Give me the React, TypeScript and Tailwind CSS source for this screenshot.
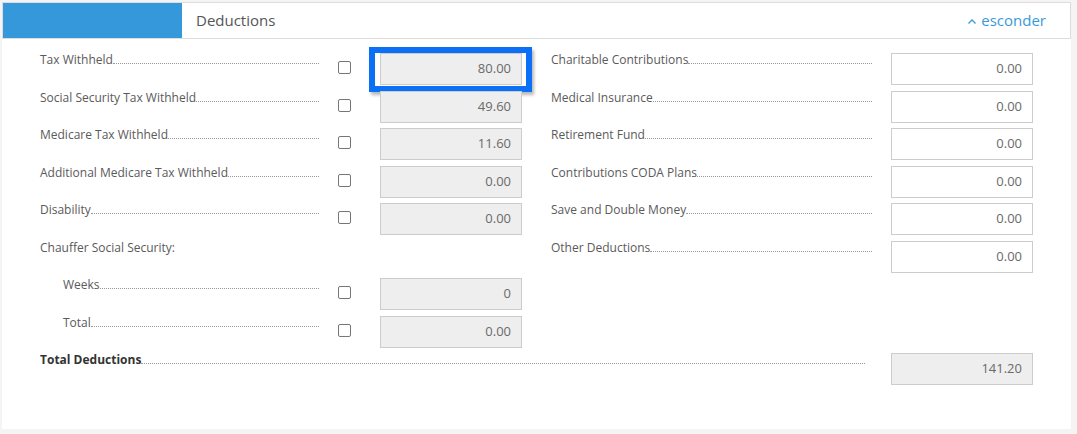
import React from "react";

const font = { fontFamily: '"Open Sans", "Liberation Sans", sans-serif' };

function Checkbox() {
  return <div className="mt-[10px] ml-[19px] h-[13px] w-[13px] shrink-0 rounded-[2px] border border-[#767676] bg-white" />;
}

function Field({ value, readOnly = true, highlight = false, className = "" }: { value: string; readOnly?: boolean; highlight?: boolean; className?: string }) {
  return (
    <div className={"relative mt-[2px] shrink-0 " + className}>
      <div
        className={
          "flex h-[32px] w-[142px] items-center justify-end border border-[#cccccc] pr-[10px] text-[13px] text-[#6a6a6a] " +
          (readOnly ? "bg-[#eeeeee]" : "bg-white")
        }
      >
        {value}
      </div>
      {highlight && (
        <div className="pointer-events-none absolute left-[-11px] top-[-6px] h-[45px] w-[163px] border-[6px] border-[#0b70f5] shadow-[2px_3px_3px_rgba(0,0,0,0.28)]" />
      )}
    </div>
  );
}

function Label({ text, indent = false, bold = false, width }: { text: string; indent?: boolean; bold?: boolean; width: string }) {
  return (
    <div className={"flex shrink-0 items-baseline pt-[1px] text-[12px] leading-[16px] text-[#5a5a5a] " + width + (indent ? " pl-[23px]" : "")}>
      <span className={"whitespace-nowrap " + (bold ? "font-bold text-[#333333]" : "")}>{text}</span>
      <span className="mb-[1px] flex-1 border-b border-dotted border-[#999999]" />
    </div>
  );
}

function LeftRow({ label, value, indent = false, highlight = false }: { label: string; value: string; indent?: boolean; highlight?: boolean }) {
  return (
    <div className="flex h-[37.5px] items-start">
      <Label text={label} indent={indent} width="w-[279px]" />
      <Checkbox />
      <Field value={value} highlight={highlight} className="ml-[29px]" />
    </div>
  );
}

function RightRow({ label, value }: { label: string; value: string }) {
  return (
    <div className="flex h-[37.5px] items-start">
      <Label text={label} width="w-[321px]" />
      <Field value={value} readOnly={false} className="ml-[19px]" />
    </div>
  );
}

export default function App() {
  return (
    <div className="h-[434px] w-[1077px] overflow-hidden bg-[#f4f4f4] pl-[2px] pr-[6px] pt-[2px]" style={font}>
      <div className="flex h-[37px] border border-[#dddddd] bg-white">
        <div className="h-full w-[179px] bg-[#3598db]" />
        <div className="flex flex-1 items-center justify-between pl-[14px] pr-[24px]">
          <span className="text-[15px] text-[#555555]">Deductions</span>
          <span className="flex items-center gap-[4px] text-[15px] text-[#3a9ad9]">
            <svg width="10" height="7" viewBox="0 0 10 7" className="mt-[2px]">
              <polyline points="1.5,5.5 5,2 8.5,5.5" fill="none" stroke="#3a9ad9" strokeWidth="1.3" />
            </svg>
            esconder
          </span>
        </div>
      </div>
      <div className="h-[390px] bg-white pl-[38px] pt-[12px]">
        <div className="flex gap-[29px]">
          <div className="flex flex-col">
            <LeftRow label="Tax Withheld" value="80.00" highlight />
            <LeftRow label="Social Security Tax Withheld" value="49.60" />
            <LeftRow label="Medicare Tax Withheld" value="11.60" />
            <LeftRow label="Additional Medicare Tax Withheld" value="0.00" />
            <LeftRow label="Disability" value="0.00" />
            <div className="h-[37.5px] pt-[1px] text-[12px] leading-[16px] text-[#5a5a5a]">Chauffer Social Security:</div>
            <LeftRow label="Weeks" value="0" indent />
            <LeftRow label="Total" value="0.00" indent />
          </div>
          <div className="flex flex-col">
            <RightRow label="Charitable Contributions" value="0.00" />
            <RightRow label="Medical Insurance" value="0.00" />
            <RightRow label="Retirement Fund" value="0.00" />
            <RightRow label="Contributions CODA Plans" value="0.00" />
            <RightRow label="Save and Double Money" value="0.00" />
            <RightRow label="Other Deductions" value="0.00" />
          </div>
        </div>
        <div className="flex h-[37.5px] items-start">
          <Label text="Total Deductions" bold width="w-[825px]" />
          <Field value="141.20" className="ml-[26px]" />
        </div>
      </div>
    </div>
  );
}
